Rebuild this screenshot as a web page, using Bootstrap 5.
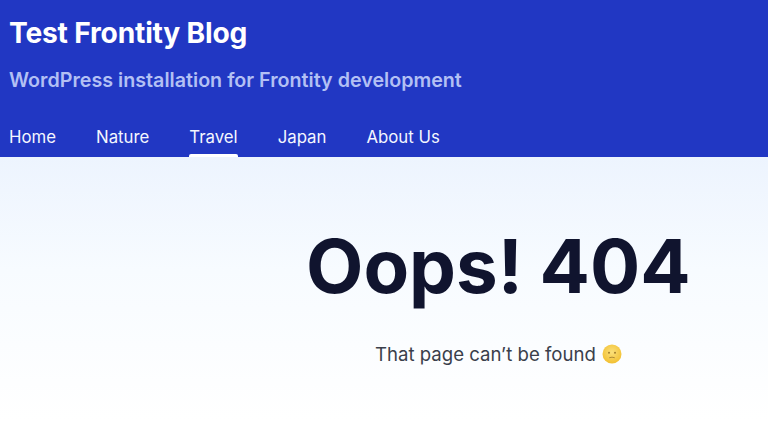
<!DOCTYPE html>
<html lang="en"><head><meta charset="utf-8"><title>Oops</title>
<link href="https://cdn.jsdelivr.net/npm/bootstrap@5.3.0/dist/css/bootstrap.min.css" rel="stylesheet">
<style>
html,body{height:443px;overflow:hidden}
body{font-family:Inter,"Liberation Sans",sans-serif;background:linear-gradient(180deg,#edf4fe 157px,#f7fbff 270px,#fff 420px)}
.site-head{background:#2137c3;height:157px;padding:17px 9px 0}
.site-title{font-size:28.2px;font-weight:700;line-height:33px;color:#fff;margin:0;letter-spacing:-.2px}
.site-sub{font-size:19.7px;font-weight:600;line-height:24px;color:#b3c0f4;margin:18px 0 0}
.site-nav{gap:40px;margin-top:33px}
.site-nav a{color:#f4f6fe;font-size:16.8px;line-height:24px;text-decoration:none;display:block;position:relative;height:32px}
.site-nav a.on::after{content:"";position:absolute;left:0;right:0;bottom:0;height:3px;background:#fff;border-radius:2px 2px 0 0}
.oops{font-size:74.5px;font-weight:700;line-height:90px;color:#10142e;margin:0;padding-left:306px;white-space:nowrap;word-spacing:-1px}
.msg{font-size:18.6px;line-height:26px;color:#3a3f4b;margin:0;padding-left:375px;white-space:nowrap;display:flex;align-items:center}
.msg svg{margin-left:6px}
.main-area{padding-top:64px}
</style></head><body>
<header class="site-head">
<h1 class="site-title">Test Frontity Blog</h1>
<p class="site-sub">WordPress installation for Frontity development</p>
<nav class="site-nav d-flex"><a href="#">Home</a><a href="#">Nature</a><a href="#" class="on">Travel</a><a href="#">Japan</a><a href="#">About Us</a></nav>
</header>
<main class="main-area">
<h2 class="oops">Oops! 404</h2>
<p class="msg" style="margin-top:30px">That page can’t be found <svg width="20" height="20" viewBox="0 0 20 20"><defs><radialGradient id="fc" cx=".5" cy=".4" r=".6"><stop offset="0" stop-color="#fbe07a"/><stop offset="1" stop-color="#f2c032"/></radialGradient></defs><circle cx="10" cy="10" r="9.5" fill="url(#fc)"/><circle cx="7" cy="8.8" r="1" fill="#a07d2c"/><circle cx="13" cy="8.8" r="1" fill="#a07d2c"/><path d="M7.6 13.6q2.4-1 4.8 0" fill="none" stroke="#b08c36" stroke-width="1" stroke-linecap="round"/></svg></p>
</main>
<script src="https://cdn.jsdelivr.net/npm/bootstrap@5.3.0/dist/js/bootstrap.bundle.min.js"></script>
</body></html>
